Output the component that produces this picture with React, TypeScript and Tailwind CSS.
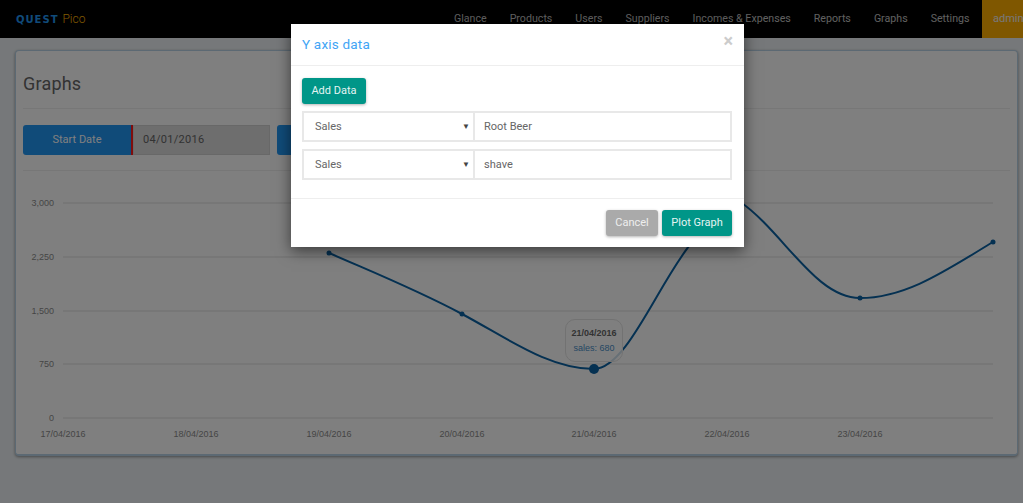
import React from 'react';

const navItems = ['Glance', 'Products', 'Users', 'Suppliers', 'Incomes & Expenses', 'Reports', 'Graphs', 'Settings'];

const yAxis = [
  { label: '3,000', y: 32 },
  { label: '2,250', y: 86 },
  { label: '1,500', y: 140 },
  { label: '750', y: 193 },
  { label: '0', y: 247 },
];

const xAxis = [
  { label: '17/04/2016', x: 40 },
  { label: '18/04/2016', x: 173 },
  { label: '19/04/2016', x: 306 },
  { label: '20/04/2016', x: 439 },
  { label: '21/04/2016', x: 571 },
  { label: '22/04/2016', x: 704 },
  { label: '23/04/2016', x: 837 },
];

const points = [
  { x: 306, y: 82 },
  { x: 439, y: 143 },
  { x: 837, y: 127 },
  { x: 970, y: 71 },
];

function Chart() {
  return (
    <div className="relative">
      <svg width="984" height="270" className="block">
        {yAxis.map((t) => (
          <g key={t.label}>
            <line x1="40" x2="970" y1={t.y} y2={t.y} stroke="#dedede" strokeWidth="1" />
            <text x="31" y={t.y + 3} textAnchor="end" fontSize="9" fill="#8c8c8c" fontFamily="Liberation Sans, sans-serif">
              {t.label}
            </text>
          </g>
        ))}
        {xAxis.map((t) => (
          <text key={t.label} x={t.x} y="266" textAnchor="middle" fontSize="9" fill="#8c8c8c" fontFamily="Liberation Sans, sans-serif">
            {t.label}
          </text>
        ))}
        <path
          d="M306 82 C354 103 394 119 439 143 C484 167 526 198 571 198 C604 198 636 110 670 70 C685 45 700 22 716 30 C760 60 792 127 837 127 C884 127 925 98 970 71"
          fill="none"
          stroke="#0b62a4"
          strokeWidth="2"
        />
        {points.map((p) => (
          <circle key={p.x} cx={p.x} cy={p.y} r="2.5" fill="#0b62a4" />
        ))}
        <circle cx="571" cy="198" r="5" fill="#0b62a4" />
      </svg>
      <div className="absolute left-[542px] top-[148px] h-[43px] w-[58px] rounded-[10px] border border-[#e4e4e4] bg-white/80 pt-[6px] text-center text-[9px] leading-[15px] font-['Liberation_Sans',sans-serif]">
        <div className="font-bold text-[#666]">21/04/2016</div>
        <div className="text-[#4a8fc8]">sales: 680</div>
      </div>
    </div>
  );
}

function DataRow({ value }: { value: string }) {
  return (
    <div className="flex h-[31px]">
      <div className="flex w-[172px] items-center justify-between border-2 border-r border-[#e8e8e8] pl-[11px] pr-[3px] text-[11px] text-[#666]">
        <span className="mt-[1px]">Sales</span>
        <span className="text-[8px] text-[#444]">▼</span>
      </div>
      <div className="flex flex-1 items-center border-2 border-l border-[#e8e8e8] pl-[9px] text-[11px] text-[#666]">{value}</div>
    </div>
  );
}

export default function App() {
  return (
    <div className="relative h-[503px] w-[1023px] overflow-hidden bg-[#ecf1f4] font-['Roboto',sans-serif]">
      <nav className="flex h-[38px] items-center justify-between bg-black">
        <div className="flex items-center gap-[4px] pl-[16px]">
          <span className="font-['DejaVu_Sans',sans-serif] text-[10px] font-bold tracking-[1px] text-[#2196f3]">QUEST</span>
          <span className="text-[12px] font-light text-[#ffb300]">Pico</span>
        </div>
        <div className="flex h-full items-center">
          {navItems.map((item) => (
            <span key={item} className="px-[11.5px] text-[10.65px] text-[#c0c0c0]">
              {item}
            </span>
          ))}
          <div className="ml-[1px] flex h-full w-[41px] items-center overflow-hidden bg-[#ffae00] pl-[11px] text-[11px] text-[#f0f0f0]">admin</div>
        </div>
      </nav>

      <main className="px-[15px] pt-[12px]">
        <section className="h-[406px] w-[1003px] rounded-[4px] border border-b-2 border-[#b9d2e6] bg-white px-[7px] shadow-[0_1px_3px_rgba(0,0,0,0.4)]">
          <h1 className="border-b border-[#eee] pt-[21px] pb-[12px] text-[18px] leading-[24px] tracking-[0.2px] text-[#666]">Graphs</h1>
          <div className="mt-[16px] flex h-[30px] items-stretch text-[11px]">
            <div className="flex w-[110px] items-center justify-center rounded-l-[3px] border-r-2 border-[#ff1a1a] bg-[#2196f3] text-white">Start Date</div>
            <div className="flex w-[137px] items-center border border-[#d0d0d0] bg-[#dcdcdc] pl-[9px] tracking-[0.3px] text-[#666]">04/01/2016</div>
            <div className="ml-[7px] w-[60px] rounded-l-[3px] bg-[#2196f3]" />
          </div>
          <div className="mt-[15px] border-b border-[#eee]" />
          <Chart />
        </section>
      </main>

      <div className="absolute inset-0 bg-black/50" />

      <div className="absolute left-[291px] top-[24px] h-[223px] w-[453px] bg-white shadow-[0_4px_14px_rgba(0,0,0,0.55)]">
        <header className="flex h-[42px] items-start justify-between border-b border-[#eee] pl-[11px] pr-[10px] pt-[10px]">
          <h2 className="text-[13.5px] leading-[20px] tracking-[0.2px] text-[#42a5f5]">Y axis data</h2>
          <span className="mr-[1px] text-[18px] font-bold leading-[14px] text-[#ccc]">×</span>
        </header>
        <div className="h-[133px] border-b border-[#eee] px-[11px] pt-[11px]">
          <button className="h-[26px] w-[64px] rounded-[3px] bg-[#009688] text-[11px] text-[#e5f4f2] shadow-[0_1px_3px_rgba(0,0,0,0.3)]">Add Data</button>
          <div className="mt-[7px] flex w-[430px] flex-col gap-[7px]">
            <DataRow value="Root Beer" />
            <DataRow value="shave" />
          </div>
        </div>
        <footer className="flex justify-end gap-[4px] pr-[12px] pt-[11px]">
          <button className="h-[26px] w-[52px] rounded-[3px] bg-[#aaa] text-[11px] text-[#eee] shadow-[0_1px_3px_rgba(0,0,0,0.3)]">Cancel</button>
          <button className="h-[26px] w-[70px] rounded-[3px] bg-[#009688] text-[11px] text-[#e5f4f2] shadow-[0_1px_3px_rgba(0,0,0,0.3)]">Plot Graph</button>
        </footer>
      </div>
    </div>
  );
}
